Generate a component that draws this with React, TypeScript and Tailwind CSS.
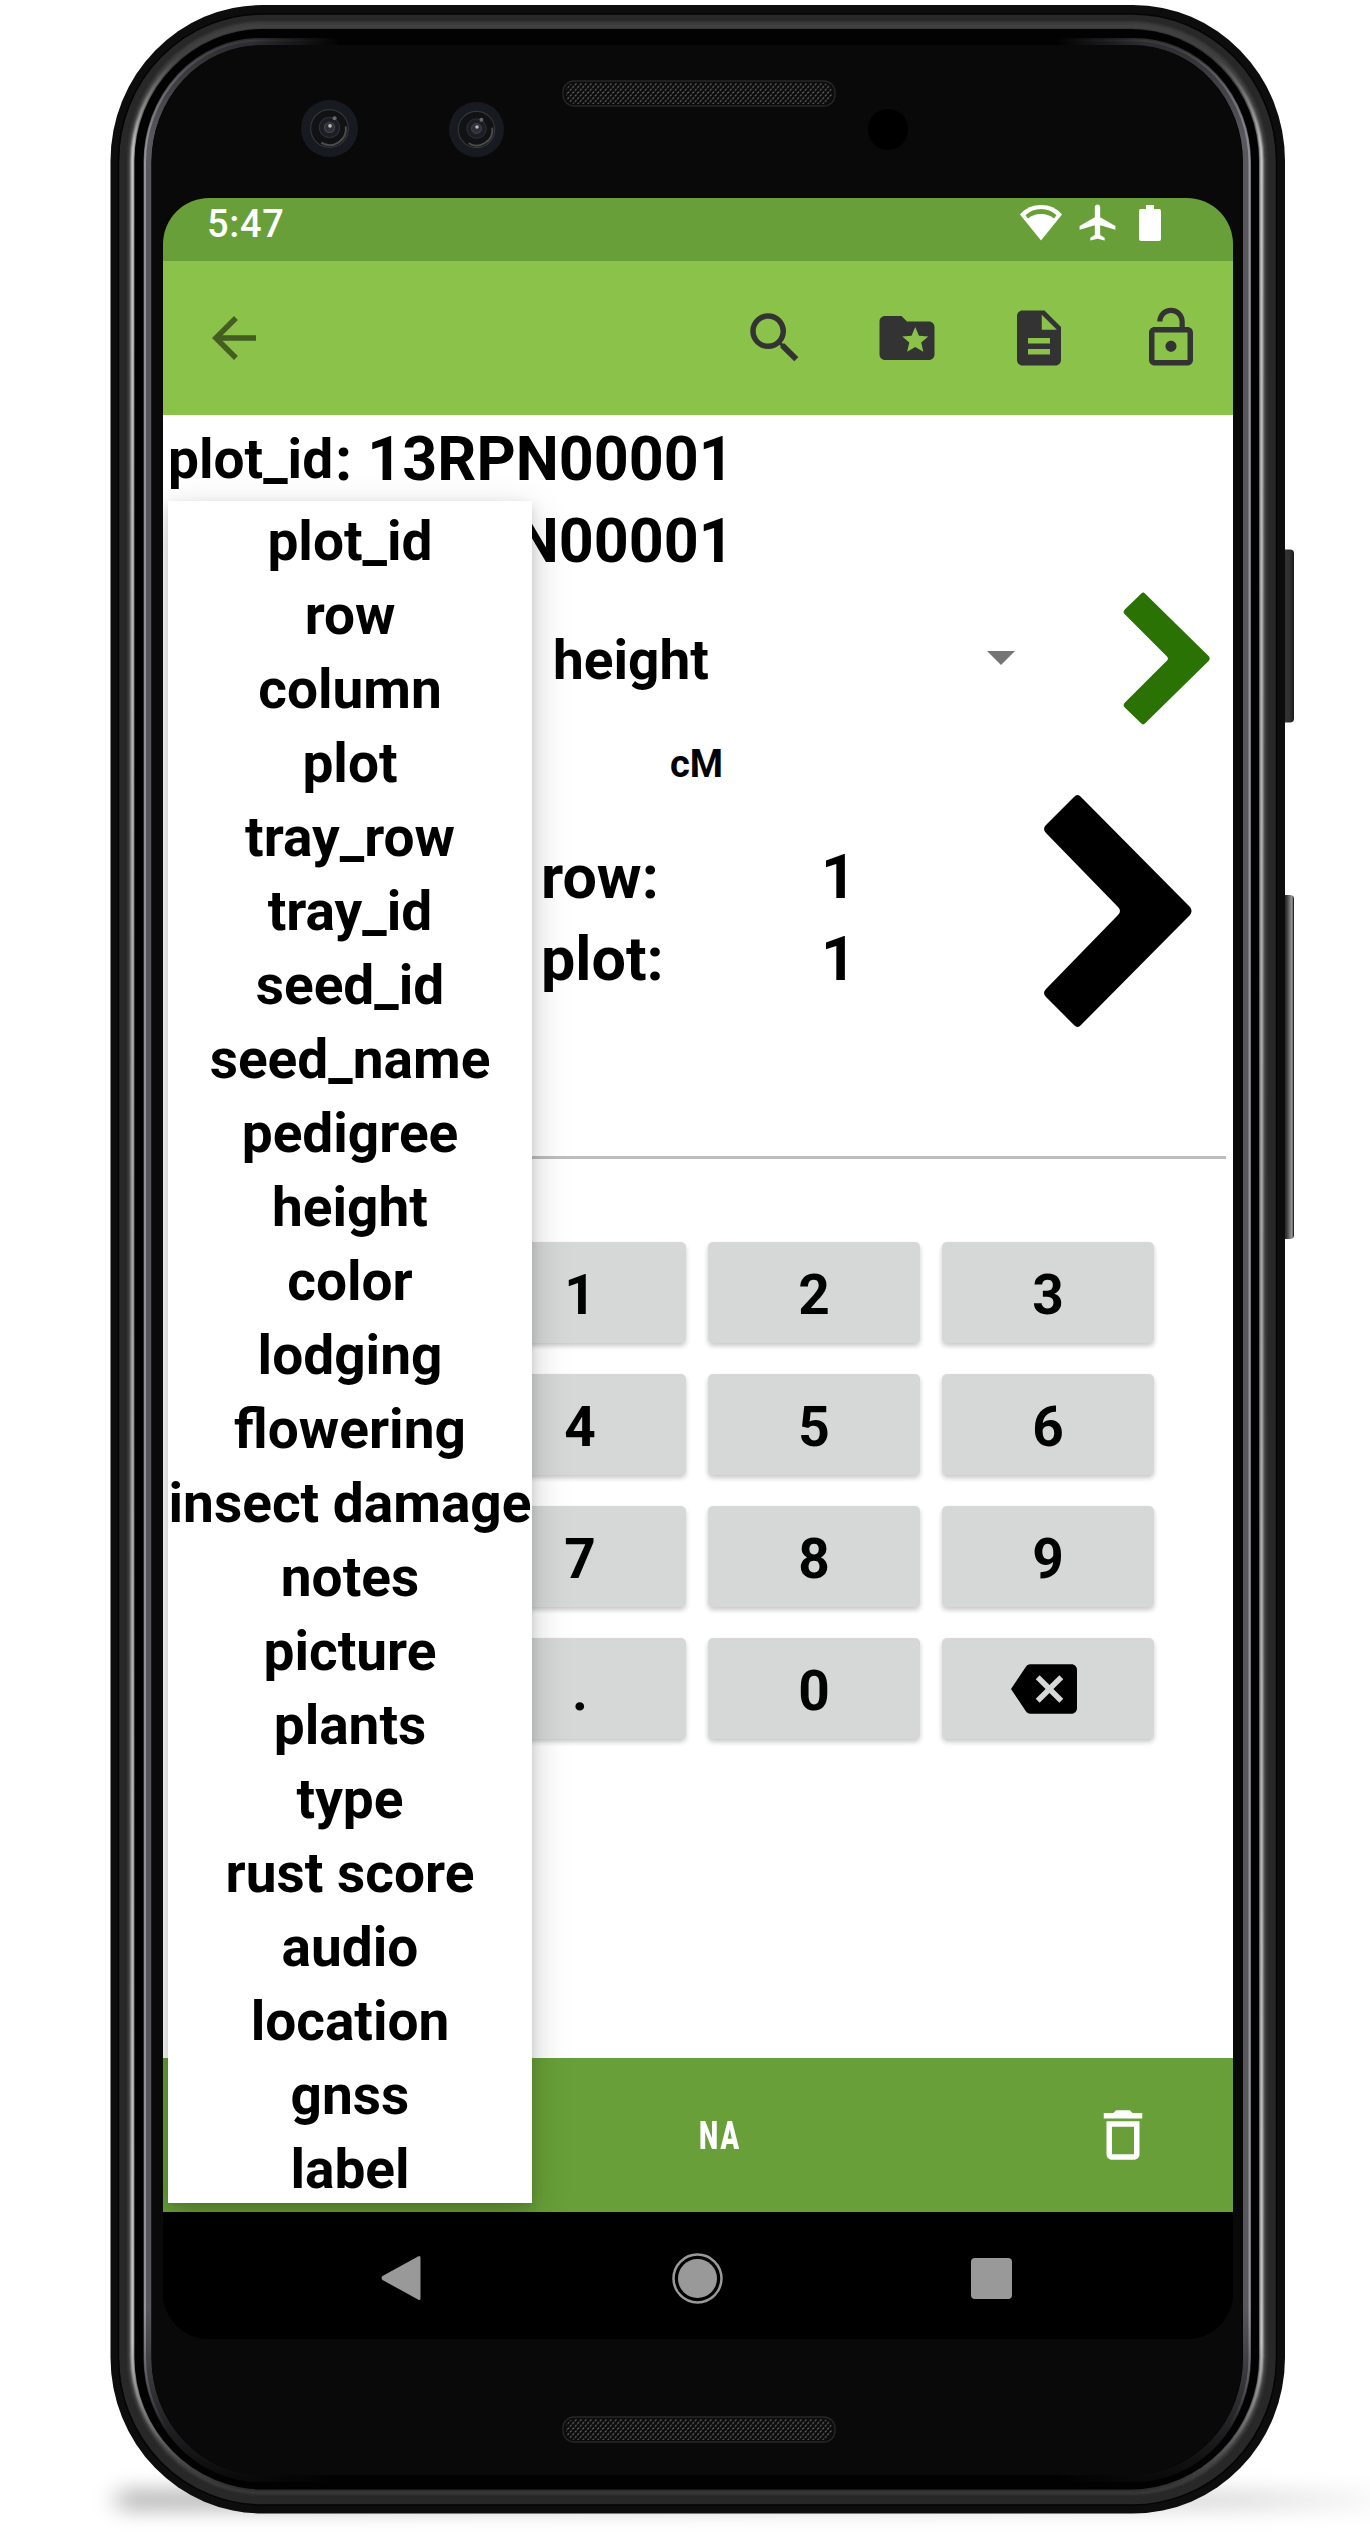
import React from "react";
import { MdArrowBack, MdSearch, MdFolderSpecial, MdDescription, MdLockOpen, MdBackspace, MdDeleteOutline, MdAirplanemodeActive } from "react-icons/md";

const attributes = [
  "plot_id", "row", "column", "plot", "tray_row", "tray_id", "seed_id", "seed_name",
  "pedigree", "height", "color", "lodging", "flowering", "insect damage", "notes",
  "picture", "plants", "type", "rust score", "audio", "location", "gnss", "label",
];

const keys = ["", "1", "2", "3", "", "4", "5", "6", "", "7", "8", "9", "", ".", "0", "back"];

/* Metal rim, glass edge reflections and side buttons of the handset. */
function Bezel() {
  return (
    <svg className="absolute inset-0 h-full w-full" viewBox="0 0 1370 2534" fill="none">
      <defs>
        <linearGradient id="metal" x1="0" x2="0" y1="0" y2="1">
          <stop offset="0" stopColor="#444" />
          <stop offset="0.012" stopColor="#444" />
          <stop offset="0.05" stopColor="#d8d8d8" />
          <stop offset="0.5" stopColor="#b4b4b4" />
          <stop offset="0.94" stopColor="#d8d8d8" />
          <stop offset="0.985" stopColor="#555" />
          <stop offset="1" stopColor="#2c2c2c" />
        </linearGradient>
        <linearGradient id="glass" x1="0" x2="0" y1="0" y2="1">
          <stop offset="0" stopColor="#2c2c31" />
          <stop offset="0.04" stopColor="#58585e" />
          <stop offset="0.93" stopColor="#58585e" />
          <stop offset="0.985" stopColor="#1a1a1c" />
          <stop offset="1" stopColor="#0a0a0a" />
        </linearGradient>
        <linearGradient id="glint" x1="0" x2="0" y1="0" y2="1">
          <stop offset="0" stopColor="#a8a8ac" stopOpacity="0.1" />
          <stop offset="0.05" stopColor="#a8a8ac" stopOpacity="0.75" />
          <stop offset="0.93" stopColor="#a8a8ac" stopOpacity="0.75" />
          <stop offset="0.98" stopColor="#a8a8ac" stopOpacity="0" />
        </linearGradient>
        <linearGradient id="fade" x1="0" x2="1" y1="0" y2="0">
          <stop offset="0" stopColor="#fff" />
          <stop offset="0.1" stopColor="#fff" />
          <stop offset="0.18" stopColor="#000" />
          <stop offset="0.82" stopColor="#000" />
          <stop offset="0.9" stopColor="#fff" />
          <stop offset="1" stopColor="#fff" />
        </linearGradient>
        <linearGradient id="power" x1="0" x2="1" y1="0" y2="0">
          <stop offset="0" stopColor="#111" />
          <stop offset="0.4" stopColor="#333" />
          <stop offset="0.7" stopColor="#303030" />
          <stop offset="1" stopColor="#1a1a1a" />
        </linearGradient>
        <linearGradient id="volume" x1="0" x2="1" y1="0" y2="0">
          <stop offset="0" stopColor="#111" />
          <stop offset="0.45" stopColor="#333" />
          <stop offset="0.72" stopColor="#777" />
          <stop offset="0.86" stopColor="#999" />
          <stop offset="1" stopColor="#000" />
        </linearGradient>
        <linearGradient id="ground" x1="0" x2="1" y1="0" y2="0">
          <stop offset="0" stopColor="#000" stopOpacity="0.3" />
          <stop offset="0.88" stopColor="#000" stopOpacity="0.14" />
          <stop offset="1" stopColor="#000" stopOpacity="0.02" />
        </linearGradient>
        <filter id="soft" x="-10%" y="-200%" width="120%" height="500%"><feGaussianBlur stdDeviation="12 10" /></filter>
        <filter id="sheen"><feGaussianBlur stdDeviation="1" /></filter>
        <mask id="edges"><rect x="140" y="0" width="1116" height="2534" fill="url(#fade)" /></mask>
      </defs>
      <rect x="116" y="2490" width="1270" height="20" rx="10" fill="url(#ground)" filter="url(#soft)" />
      <rect x="1280" y="549.5" width="14" height="173" rx="4" fill="url(#power)" />
      <rect x="1280" y="895" width="14" height="344" rx="4" fill="url(#volume)" />
      <rect x="110.5" y="5" width="1174.5" height="2508.500" rx="152" ry="156" fill="#0d0d0d" />
      <rect x="119" y="14" width="1157" height="2491" rx="144" ry="147" fill="#282828" />
      <rect x="118.500" y="14" width="1158" height="2491" rx="144" ry="147" stroke="#050505" strokeWidth="1.500" />
      <rect x="130" y="24" width="1134.500" height="2468" rx="133" ry="136" stroke="#3c3c3c" strokeWidth="5" filter="url(#sheen)" />
      <rect x="132.500" y="27" width="1129" height="2463" rx="130" ry="133" stroke="url(#metal)" strokeWidth="3.500" filter="url(#sheen)" />
      <rect x="134.500" y="29" width="1124.500" height="2460.500" rx="129" ry="132" fill="#020202" />
      <g mask="url(#edges)">
        <rect x="147.500" y="42" width="1099.500" height="2436" rx="112" ry="120" stroke="url(#glass)" strokeWidth="8" />
        <rect x="145" y="40.500" width="1104.500" height="2439" rx="114" ry="122" stroke="url(#glint)" strokeWidth="2" />
      </g>
      <rect x="151.500" y="45" width="1091" height="2430" rx="110" ry="118" fill="#090909" />
    </svg>
  );
}

function Camera({ size }: { size: number }) {
  return (
    <svg width={size} height={size} viewBox="0 0 56 56" fill="none">
      <circle cx="28" cy="28" r="28" fill="#171b21" />
      <circle cx="28" cy="28" r="18.500" fill="#111214" stroke="#333538" strokeWidth="1.200" />
      <path d="M44 26a16 16 0 0 1-24 16" stroke="#4b4b4d" strokeWidth="2" />
      <circle cx="28" cy="27" r="10" fill="#1c1e23" stroke="#2d3037" />
      <circle cx="28" cy="27" r="5" fill="#2e3037" stroke="#44474f" />
      <circle cx="28.500" cy="25.500" r="1.800" fill="#b9bbc2" />
      <circle cx="33" cy="18" r="2" fill="#66686d" />
    </svg>
  );
}

function Speaker() {
  return (
    <svg className="block" width="274" height="27" viewBox="0 0 274 27" fill="none">
      <defs>
        <pattern id="mesh" width="5" height="5.600" patternUnits="userSpaceOnUse">
          <path d="M.3 2.200l1.800-1.600M2.800 5l1.800-1.600" stroke="#6c6c6c" strokeWidth="1.200" />
        </pattern>
      </defs>
      <rect x="1" y="1" width="272" height="25" rx="11" fill="#0c0c0c" stroke="#272727" strokeWidth="1.300" />
      <rect x="4" y="3" width="266" height="21" rx="9" fill="url(#mesh)" />
    </svg>
  );
}

function Chevron({ className, w, h }: { className: string; w: number; h: number }) {
  return (
    <svg className={className} width={w} height={h} viewBox="0 0 149 234" preserveAspectRatio="none">
      <path
        d="M31 3Q34.500-1 38 3L147 113Q150 117 147 121L38 231Q34.500 235 31 231L3 203Q-1 199 3 195L75 121Q79 117 75 113L3 39Q-1 35 3 31Z"
        fill="currentColor"
      />
    </svg>
  );
}

function StatusBar() {
  return (
    <div className="flex h-[63px] items-start justify-between bg-[#689f38] pl-[44px] pr-[72px] text-white">
      <div className="mt-[4px] text-[38px] leading-[44px] font-medium tracking-[0.7px]">5:47</div>
      <div className="flex items-start pt-[7px]">
        <svg width="42" height="36" viewBox="0 0 42 36">
          <path d="M21 0C12.500 0 5.500 3 0 9.500L21 35.500L42 9.500C36.500 3 29.500 0 21 0Z" fill="#fff" />
          <path d="M5.500 10.200C10 6 15 4 21 4S32 6 36.500 10.200L34 13.600C30.500 10.500 26.500 9 21 9S11.500 10.500 8 13.600Z" fill="#689f38" />
        </svg>
        <MdAirplanemodeActive className="mt-[-4px] ml-[14px] h-[43px] w-[43px]" />
        <svg className="ml-[20px]" width="22" height="36" viewBox="0 0 22 36">
          <path d="M7 0h8v4h5q2 0 2 2v28q0 2-2 2H2q-2 0-2-2V6q0-2 2-2h5z" fill="#fff" />
        </svg>
      </div>
    </div>
  );
}

function Toolbar() {
  return (
    <div className="flex h-[154px] items-center justify-between bg-[#8bc34a] pl-[38px] pr-[29px] text-[#333]">
      <MdArrowBack className="h-[66px] w-[66px] text-[#435e20]" />
      <div className="flex gap-[66px]">
        <MdSearch className="h-[66px] w-[66px]" />
        <MdFolderSpecial className="h-[66px] w-[66px]" />
        <MdDescription className="h-[66px] w-[66px]" />
        <MdLockOpen className="h-[66px] w-[66px]" />
      </div>
    </div>
  );
}

function AttributeMenu() {
  return (
    <div className="absolute top-[303px] left-[5px] h-[1702px] w-[364px] bg-white pt-[3px] text-center text-[55px] leading-[74px] shadow-[0_12px_36px_rgba(0,0,0,0.2),0_4px_10px_rgba(0,0,0,0.12)]">
      {attributes.map((name) => (
        <div key={name} className="flex justify-center whitespace-nowrap">{name}</div>
      ))}
    </div>
  );
}

function Content() {
  return (
    <div className="h-[1643px] bg-white">
      <div className="pt-[3px] pl-[5px] text-[61px] leading-[82px]">
        <div className="flex h-[82px] whitespace-pre">
          <span className="w-[167px] text-[55px]">plot_id</span>
          <span>: 13RPN00001</span>
        </div>
        <div className="h-[82px] pl-[167px] whitespace-pre">: 13RPN00001</div>
      </div>
      <div className="flex h-[152px] items-center pr-[23px] pl-[390px]">
        <div className="mt-[4px] flex-1 text-[55px] leading-[74px]">height</div>
        <svg className="mr-[108px]" width="28" height="14" viewBox="0 0 28 14">
          <path d="M0 0h28L14 14z" fill="#757575" />
        </svg>
        <Chevron className="text-[#2b7205]" w={87} h={133} />
      </div>
      <div className="h-[60px] pt-[5px] pl-[507px] text-[38px] leading-[50px]">cM</div>
      <div className="flex h-[236px] justify-between pr-[41px] pl-[378px]">
        <div className="pt-[42px] text-[61px] leading-[82px]">
          <div className="flex"><span className="w-[280px]">row:</span><span>1</span></div>
          <div className="flex"><span className="w-[280px]">plot:</span><span>1</span></div>
        </div>
        <Chevron className="text-black" w={149} h={234} />
      </div>
      <div className="mt-[126px] mr-[7px] ml-[5px] h-[3px] bg-[#bdbdbd]" />
      <div className="mt-[83px] ml-[77px] grid grid-cols-[repeat(4,212px)] gap-x-[22px] gap-y-[31px]">
        {keys.map((key, i) => (
          <div key={i} className="flex h-[101px] items-center justify-center rounded-[5px] bg-[#d6d8d7] text-[55px] shadow-[0_3px_5px_rgba(0,0,0,0.22)]">
            {key === "back" ? (
              <MdBackspace className="mr-[8px] h-[66px] w-[66px] text-black" />
            ) : (
              <span className="pt-[6px]">{key}</span>
            )}
          </div>
        ))}
      </div>
    </div>
  );
}

function BottomBar() {
  return (
    <div className="flex h-[154px] items-center justify-between bg-[#689f38] pr-[77px] pl-[536px] text-white">
      <div className="mt-[2px] origin-left scale-x-[0.7] text-[39px] leading-[44px] font-black tracking-[3px]">NA</div>
      <MdDeleteOutline className="h-[66px] w-[66px]" />
    </div>
  );
}

function NavBar() {
  return (
    <div className="flex h-[127px] items-center bg-black pt-[5px] pl-[218px] text-[#999]">
      <svg width="40" height="46" viewBox="0 0 40 46">
        <path d="M37 1.500Q39.500 0 39.500 3V43Q39.500 46 37 44.500L1.500 25Q-.5 23 1.500 21Z" fill="currentColor" />
      </svg>
      <svg className="ml-[251px]" width="51" height="51" viewBox="0 0 51 51" fill="none">
        <circle cx="25.500" cy="25.500" r="24" stroke="currentColor" strokeWidth="2.500" />
        <circle cx="25.500" cy="25.500" r="19.500" fill="currentColor" />
      </svg>
      <div className="ml-[248px] h-[41px] w-[41px] rounded-[4px] bg-[#999]" />
    </div>
  );
}

export default function App() {
  return (
    <div className="relative h-[2534px] w-[1370px] overflow-hidden bg-white font-['Roboto',sans-serif] font-bold text-black">
      <Bezel />
      <div className="relative flex flex-col">
        <div className="flex h-[198px] items-start">
          <div className="mt-[100px] ml-[301px]"><Camera size={57} /></div>
          <div className="mt-[102px] ml-[91px]"><Camera size={55} /></div>
          <div className="mt-[80px] ml-[58px]"><Speaker /></div>
          <div className="mt-[109px] ml-[32px] h-[41px] w-[40px] rounded-full bg-black" />
        </div>
        <div className="relative ml-[163px] h-[2141px] w-[1070px] overflow-hidden rounded-[46px] bg-black">
          <StatusBar />
          <Toolbar />
          <Content />
          <BottomBar />
          <NavBar />
          <AttributeMenu />
        </div>
        <div className="mt-[77px] ml-[562px]"><Speaker /></div>
      </div>
    </div>
  );
}
